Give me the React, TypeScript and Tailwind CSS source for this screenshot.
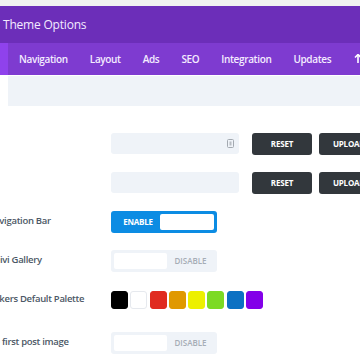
import { useState } from "react";

const tabs = ["Navigation", "Layout", "Ads", "SEO", "Integration", "Updates"];

const palette = ["#000000", "#ffffff", "#e02b20", "#e09900", "#edf000", "#7cda24", "#0c71c3", "#8300e9"];

const FileIcon = () => (
  <svg width="7" height="9" viewBox="0 0 7 9" fill="none">
    <rect x="0.5" y="0.5" width="6" height="8" rx="1" stroke="#a3a9b0" />
    <rect x="2.5" y="2.5" width="2" height="4" fill="#b7bcc2" />
  </svg>
);

function Label({ text }: { text: string }) {
  return (
    <div className="w-[149px] shrink-0 whitespace-nowrap text-[9.5px] font-semibold tracking-[-0.3px] text-[#4c5866]">
      {text}
    </div>
  );
}

function UploadRow({ label, icon }: { label: string; icon?: boolean }) {
  return (
    <div className="flex h-[39px] items-center">
      <Label text={label} />
      <div className="flex h-[21px] w-[128px] shrink-0 items-center justify-end rounded-[3px] bg-[#eff3f8] pr-[5px]">
        {icon && <FileIcon />}
      </div>
      <button className="ml-[13px] flex h-[22px] w-[60px] shrink-0 items-center justify-center rounded-[3px] bg-[#32373c] text-[8px] font-bold tracking-[-0.2px] text-white">
        RESET
      </button>
      <button className="ml-[7px] flex h-[22px] w-[60px] shrink-0 items-center justify-center rounded-[3px] bg-[#32373c] text-[8px] font-bold tracking-[-0.2px] text-white">
        UPLOAD
      </button>
    </div>
  );
}

function Toggle({ on }: { on: boolean }) {
  if (on) {
    return (
      <div className="flex h-[22px] w-[106px] shrink-0 items-center rounded-[3px] bg-[#0c8ce3] p-[3px]">
        <span className="flex-1 pl-[2px] text-center text-[8px] font-bold tracking-[-0.2px] text-white">ENABLE</span>
        <span className="h-[16px] w-[54px] rounded-[2px] bg-white" />
      </div>
    );
  }
  return (
    <div className="flex h-[22px] w-[106px] shrink-0 items-center rounded-[3px] bg-[#eff3f8] p-[3px]">
      <span className="h-[16px] w-[53px] rounded-[2px] bg-white" />
      <span className="flex-1 text-center text-[8px] font-semibold text-[#a6adb6]">DISABLE</span>
    </div>
  );
}

export default function App() {
  const [active] = useState(0);
  return (
    <div
      className="h-[360px] w-[360px] overflow-hidden bg-white"
      style={{ fontFamily: '"Open Sans", "Noto Sans", sans-serif' }}
    >
      <div className="h-[6px] bg-[#f1f1f1]" />

      {/* Header */}
      <div className="flex h-[37px] items-center bg-[#6c2eb9] pl-[3px] text-[12px] tracking-[-0.2px] text-[#f3ebff]">
        Theme Options
      </div>

      {/* Tabs */}
      <div className="flex h-[32px] items-center bg-[#7e3bd0]">
        <div className={`h-full w-[8px] shrink-0 ${active === 0 ? "bg-[#8f42ec]" : ""}`} />
        {tabs.map((t) => (
          <div
            key={t}
            className="shrink-0 whitespace-nowrap px-[11px] text-[10px] font-semibold tracking-[-0.35px] text-[#f4ecff]"
          >
            {t}
          </div>
        ))}
        <div className="ml-[12px] shrink-0">
          <svg width="10" height="10" viewBox="0 0 10 10" fill="none">
            <path d="M1 3.5 L4 0.5 L7 3.5" stroke="white" strokeWidth="1.6" />
            <path d="M4 1 V9" stroke="white" strokeWidth="1.6" />
          </svg>
        </div>
      </div>

      <div className="ml-[8px] mt-[1px] h-[30px] bg-[#eff3f8]" />

      {/* Options */}
      <div className="ml-[-38px] mt-[18px]">
        <UploadRow label="Logo" icon />
        <UploadRow label="Favicon" />
        <div className="flex h-[39px] items-center">
          <Label text="Fixed Navigation Bar" />
          <Toggle on />
        </div>
        <div className="flex h-[39px] items-center">
          <Label text="Enable Divi Gallery" />
          <Toggle on={false} />
        </div>
        <div className="flex h-[39px] items-center">
          <Label text="Color Pickers Default Palette" />
          <div className="flex gap-[2.3px]">
            {palette.map((c) => (
              <span
                key={c}
                className="h-[18px] w-[17px] rounded-[3px] border"
                style={{ backgroundColor: c, borderColor: c === "#ffffff" ? "#e6e9ee" : c }}
              />
            ))}
          </div>
        </div>
        <div className="mt-[4px] flex h-[39px] items-center">
          <Label text="Grab the first post image" />
          <Toggle on={false} />
        </div>
      </div>
    </div>
  );
}
